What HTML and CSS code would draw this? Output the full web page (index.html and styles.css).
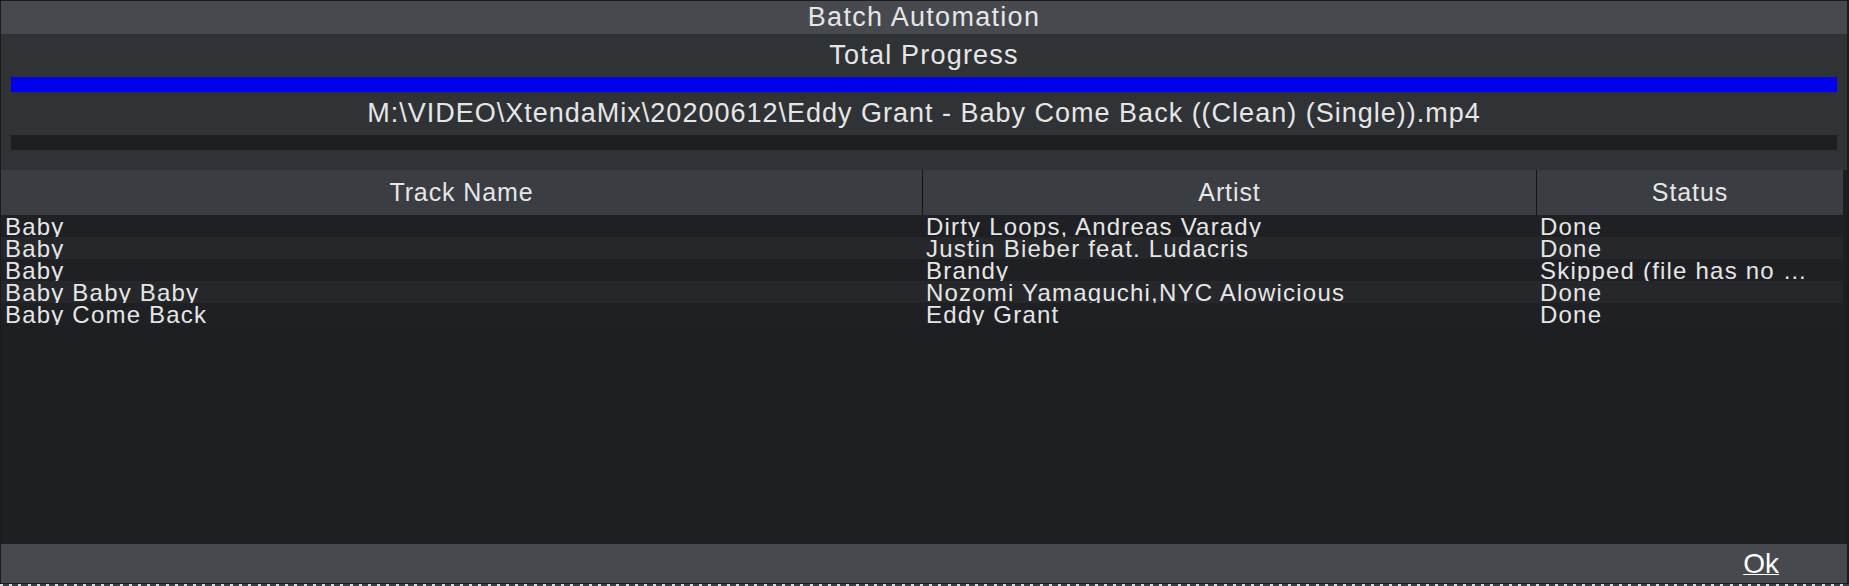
FILE: index.html
```html
<!DOCTYPE html>
<html lang="en">
<head>
  <meta charset="UTF-8">
  <title>Batch Automation</title>
  <link rel="stylesheet" href="styles.css">
</head>
<body>

  <div class="window">
    <div class="titlebar">Batch Automation</div>

    <div class="progress-area">
      <div class="label total">Total Progress</div>
      <div class="bar"><div class="fill" style="width: 100%"></div></div>
      <div class="label">M:\VIDEO\XtendaMix\20200612\Eddy Grant - Baby Come Back ((Clean) (Single)).mp4</div>
      <div class="bar"><div class="fill" style="width: 0%"></div></div>
    </div>

    <div class="list">
      <div class="header">
        <div class="head-cell">Track Name</div>
        <div class="head-cell">Artist</div>
        <div class="head-cell last">Status</div>
      </div>

      <div class="row">
        <div class="cell first">Baby</div>
        <div class="cell">Dirty Loops, Andreas Varady</div>
        <div class="cell">Done</div>
      </div>
      <div class="row">
        <div class="cell first">Baby</div>
        <div class="cell">Justin Bieber feat. Ludacris</div>
        <div class="cell">Done</div>
      </div>
      <div class="row">
        <div class="cell first">Baby</div>
        <div class="cell">Brandy</div>
        <div class="cell">Skipped (file has no …</div>
      </div>
      <div class="row">
        <div class="cell first">Baby Baby Baby</div>
        <div class="cell">Nozomi Yamaguchi,NYC Alowicious</div>
        <div class="cell">Done</div>
      </div>
      <div class="row">
        <div class="cell first">Baby Come Back</div>
        <div class="cell">Eddy Grant</div>
        <div class="cell">Done</div>
      </div>
    </div>

    <div class="footer">
      <a class="ok-button">Ok</a>
    </div>
  </div>
  <div class="strip"></div>

</body>
</html>
```

FILE: styles.css
```css
body {
  margin: 0;
  background: #1e1f22;
  font-family: "Liberation Sans", Arial, sans-serif;
  color: #e6e6e6;
  overflow: hidden;
}

.window {
  height: 583px;
  box-sizing: border-box;
  border-top: 1px solid #1a1b1d;
  border-left: 1px solid #1a1b1d;
  border-right: 2px solid #1a1b1d;
  display: flex;
  flex-direction: column;
}

.titlebar {
  height: 33px;
  line-height: 33px;
  background: #46494d;
  text-align: center;
  font-size: 27px;
  letter-spacing: 1.3px;
}

.progress-area {
  background: #303336;
  padding: 0 10px 20px 10px;
}

.label {
  height: 43px;
  line-height: 43px;
  text-align: center;
  font-size: 27px;
  letter-spacing: 1px;
  white-space: nowrap;
}

.label.total {
  letter-spacing: 1.2px;
}

.bar {
  height: 15px;
  background: #1e1f22;
}

.bar .fill {
  height: 100%;
  background: #0000ee;
}

.list {
  flex: 1;
  background: #1e1f22;
  padding-right: 4px;
}

.header,
.row {
  display: grid;
  grid-template-columns: 922px 614px 1fr;
}

.header {
  height: 45px;
  background: #3a3d41;
}

.head-cell {
  border-right: 1px solid #141517;
  line-height: 45px;
  text-align: center;
  font-size: 25px;
  letter-spacing: 0.9px;
}

.head-cell.last {
  border-right: none;
}

.row {
  height: 22px;
  overflow: hidden;
  background: #1f2023;
}

.row:nth-child(odd) {
  background: #25272a;
}

.cell {
  height: 22px;
  line-height: 24px;
  overflow: hidden;
  white-space: nowrap;
  padding-left: 3px;
  font-size: 24px;
  letter-spacing: 1.2px;
}

.cell.first {
  padding-left: 4px;
}

.footer {
  height: 39px;
  background: #46494d;
  display: flex;
  justify-content: flex-end;
  padding-right: 68px;
}

.ok-button {
  line-height: 39px;
  font-size: 28px;
  color: #ffffff;
  text-decoration: underline;
  text-decoration-thickness: 1px;
  cursor: pointer;
}

.strip {
  height: 2px;
  border-top: 1px solid #1a1b1d;
  background: repeating-linear-gradient(90deg, #d8d8d8 0 3px, #3c4044 3px 9.2px);
}
```
